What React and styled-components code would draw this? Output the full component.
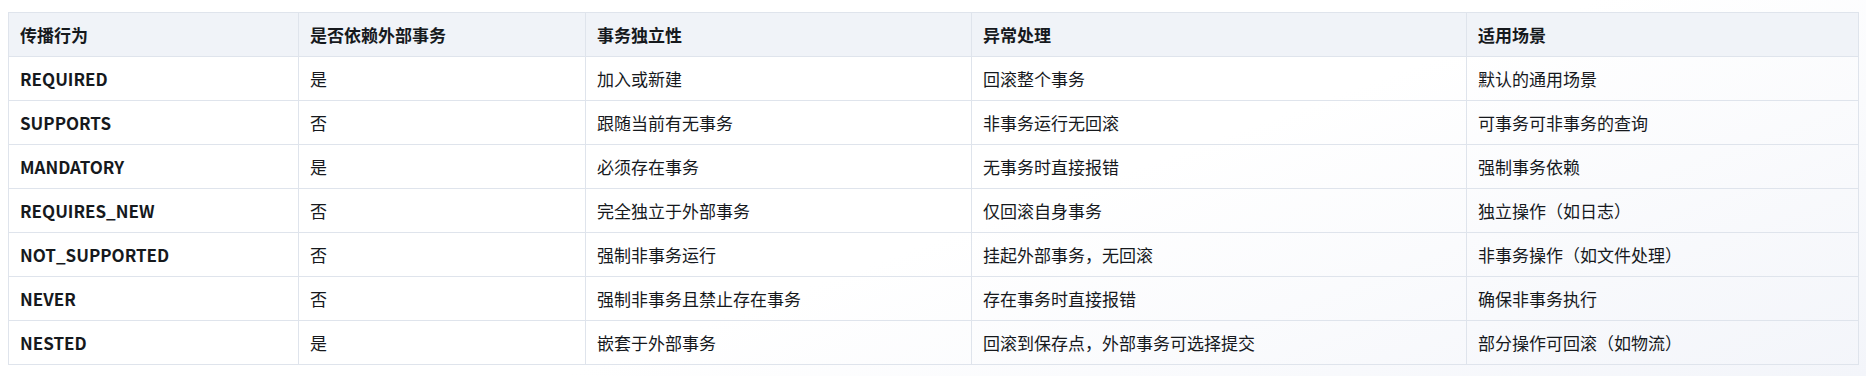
import styled, { createGlobalStyle } from 'styled-components';

const GlobalStyle = createGlobalStyle`
  html, body {
    margin: 0;
    padding: 0;
  }

  body {
    font-family: "Noto Sans CJK SC", "Noto Sans", sans-serif;
    color: #16191d;
    background: linear-gradient(160deg, #ffffff 55%, #f3f5fa 100%);
    min-height: 376px;
  }
`;

const rows = [
  ['REQUIRED', '是', '加入或新建', '回滚整个事务', '默认的通用场景'],
  ['SUPPORTS', '否', '跟随当前有无事务', '非事务运行无回滚', '可事务可非事务的查询'],
  ['MANDATORY', '是', '必须存在事务', '无事务时直接报错', '强制事务依赖'],
  ['REQUIRES_NEW', '否', '完全独立于外部事务', '仅回滚自身事务', '独立操作（如日志）'],
  ['NOT_SUPPORTED', '否', '强制非事务运行', '挂起外部事务，无回滚', '非事务操作（如文件处理）'],
  ['NEVER', '否', '强制非事务且禁止存在事务', '存在事务时直接报错', '确保非事务执行'],
  ['NESTED', '是', '嵌套于外部事务', '回滚到保存点，外部事务可选择提交', '部分操作可回滚（如物流）'],
];

const headers = ['传播行为', '是否依赖外部事务', '事务独立性', '异常处理', '适用场景'];
const widths = [290, 287, 386, 495, 392];

export default function App() {
  return (
    <>
      <GlobalStyle />
      <Page>
        <Table>
          <colgroup>
            {widths.map((w, i) => (
              <col key={i} style={{ width: w }} />
            ))}
          </colgroup>
          <thead>
            <tr>
              {headers.map(h => (
                <Th key={h}>{h}</Th>
              ))}
            </tr>
          </thead>
          <tbody>
            {rows.map(r => (
              <tr key={r[0]}>
                {r.map((c, i) => (
                  <Td key={i} $strong={i === 0}>
                    {c}
                  </Td>
                ))}
              </tr>
            ))}
          </tbody>
        </Table>
      </Page>
    </>
  );
}

const Page = styled.div`
  padding: 12px 8px 0 8px;
`;

const Table = styled.table`
  width: 100%;
  table-layout: fixed;
  border-collapse: collapse;
  font-size: 17px;
  line-height: 24px;
`;

const Th = styled.th`
  height: 43px;
  padding: 0 11px;
  text-align: left;
  font-weight: 700;
  background: #f0f3f8;
  border: 1px solid #dfe4ec;
`;

const Td = styled.td`
  height: 43px;
  padding: 0 11px;
  text-align: left;
  font-weight: ${p => (p.$strong ? 700 : 400)};
  border: 1px solid #dfe4ec;
  white-space: nowrap;
`;
